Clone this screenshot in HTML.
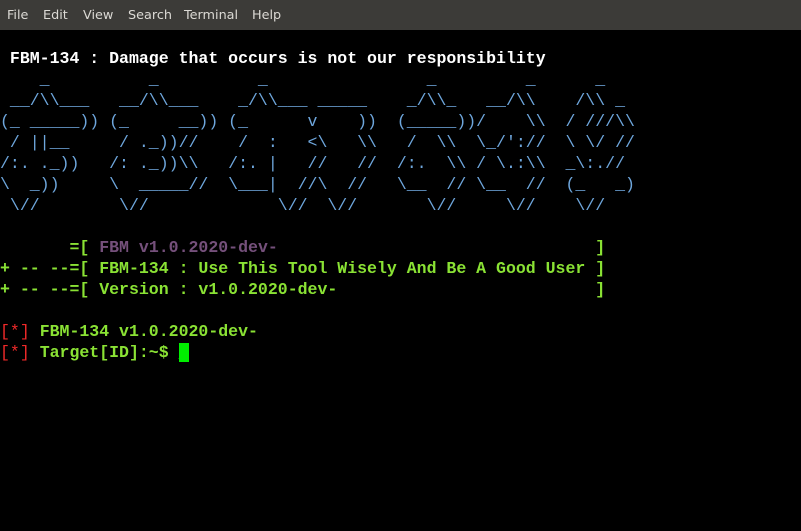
<!DOCTYPE html>
<html><head><meta charset="utf-8"><style>
html,body{margin:0;padding:0;background:#000;width:801px;height:531px;overflow:hidden}
.menu{height:30px;background:#3c3b38;color:#dcdad5;font:12.8px "DejaVu Sans","Liberation Sans",sans-serif;position:relative}
.menu span{position:absolute;top:8px}
pre{position:absolute;left:0;top:48px;margin:0;font:16.55px/21px "Liberation Mono",monospace;color:#fff;white-space:pre}
.b{font-weight:bold}
.a{color:#6ea6dc}
.g{color:#8ae234;font-weight:bold}
.p{color:#75507b;font-weight:bold}
.r{color:#ef2929}
.c{background:#00ee00;color:#00ee00}
</style></head><body>
<div class="menu"><span style="left:7px">File</span><span style="left:43px">Edit</span><span style="left:83px">View</span><span style="left:128px">Search</span><span style="left:184px">Terminal</span><span style="left:252px">Help</span></div>
<pre><span class="b"> FBM-134 : Damage that occurs is not our responsibility</span>
<span class="a">    _          _          _                _         _      _
 __/\\___   __/\\___    _/\\___ _____    _/\\_   __/\\    /\\ _
(_ _____)) (_     __)) (_      v    ))  (_____))/    \\  / ///\\
 / ||__     / ._))//    /  :   <\   \\   /  \\  \_/'://  \ \/ //
/:. ._))   /: ._))\\   /:. |   //   //  /:.  \\ / \.:\\  _\:.//
\  _))     \  _____//  \___|  //\  //   \__  // \__  //  (_   _)
 \//        \//             \//  \//       \//     \//    \//</span>

<span class="g">       =[ </span><span class="p">FBM v1.0.2020-dev-</span><span class="g">                                ]
+ -- --=[ FBM-134 : Use This Tool Wisely And Be A Good User ]
+ -- --=[ Version : v1.0.2020-dev-                          ]</span>

<span class="r">[*]</span> <span class="g">FBM-134 v1.0.2020-dev-</span>
<span class="r">[*]</span> <span class="g">Target[ID]:~$ </span><span class="c">_</span></pre>
</body></html>
